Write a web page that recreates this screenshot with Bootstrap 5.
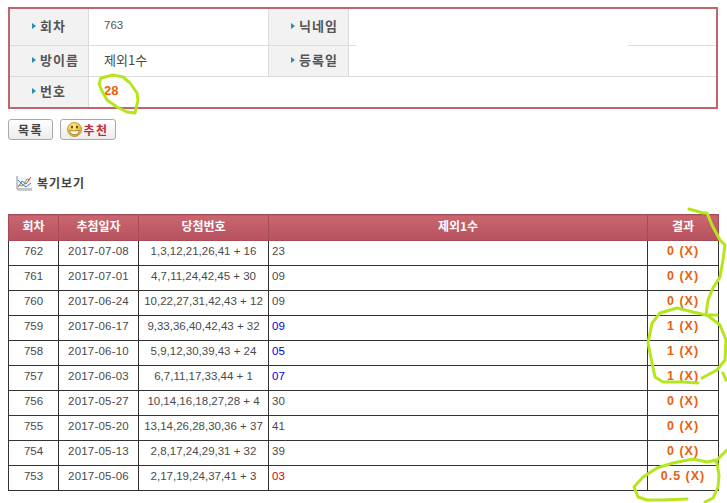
<!DOCTYPE html>
<html lang="ko">
<head>
<meta charset="utf-8">
<title>복기보기</title>
<link href="https://cdn.jsdelivr.net/npm/bootstrap@5.3.0/dist/css/bootstrap.min.css" rel="stylesheet">
<style>
html,body{height:503px;overflow:hidden;background:#fff}
body{position:relative;font-family:"Liberation Sans","Noto Sans CJK KR",sans-serif;font-size:12px;color:#444;padding:7px 9px 0 8px}
.info-box{border:2px solid #c5636c;width:710px}
.info-tbl{table-layout:fixed;width:100%;border-collapse:separate;border-spacing:0}
.info-tbl th,.info-tbl td{padding:0 0 3px;border-right:1px solid #dcdcdc;border-bottom:1px solid #dcdcdc;vertical-align:middle}
.info-tbl tr:last-child th,.info-tbl tr:last-child td{border-bottom:0}
.info-tbl td:last-child{border-right:0}
.info-tbl .r1>*{height:37px}
.info-tbl .r2>*{height:31px}
.info-tbl .r3>*{height:30px}
.info-tbl th{background:#f2f2f2;font-family:"Noto Sans CJK KR","Liberation Sans",sans-serif;font-weight:700;font-size:13px;letter-spacing:1px;color:#555;padding-left:22px;text-align:left}
.info-tbl td{padding-left:15px;font-size:11.5px;color:#555}
.info-tbl .kr{font-family:"Noto Sans CJK KR",sans-serif;font-size:13px;font-weight:400;color:#4a4a4a}
.arrow-mark{display:inline-block;width:0;height:0;border-left:4px solid #2b8db3;border-top:3.5px solid transparent;border-bottom:3.5px solid transparent;margin-right:4px;vertical-align:2px}
.nick-cell{position:relative}
.nick-cell::after{content:"";position:absolute;left:7px;width:272px;bottom:-1px;height:1px;background:#fff}
.hit-num{color:#ee5f0c;font-weight:700;font-size:13px}
.btn-row{display:flex;gap:7px;margin-top:10px}
.btn.old-btn{--bs-btn-padding-x:0;--bs-btn-padding-y:0;height:21px;display:flex;align-items:center;justify-content:center;gap:1px;background:linear-gradient(#fff,#ececec);border:1px solid #a9a9a9;border-radius:3px;font-family:"Noto Sans CJK KR",sans-serif;font-weight:700;font-size:12px;letter-spacing:1.5px;color:#444}
.btn-list{width:45px}
.btn-rec{width:56px;color:#bd2d44!important}
.section-title{display:flex;align-items:center;gap:5px;margin:34px 0 0 8px;height:18px;font-family:"Noto Sans CJK KR",sans-serif;font-weight:700;font-size:12px;letter-spacing:1px;color:#444}
.result-tbl.table{table-layout:fixed;width:710px;margin:22px 0 0;--bs-table-border-color:#333;--bs-table-color:#4a4a4a;border-collapse:collapse;font-size:11.5px}
.result-tbl.table>:not(caption)>*>*{padding:0 0 3px;height:25px;vertical-align:middle;border:1px solid #333;text-align:center}
.result-tbl.table thead th{height:26px;--bs-table-bg:transparent;background:linear-gradient(#ca666f,#b5525f);color:#fff;border-color:#a54c58;font-family:"Noto Sans CJK KR",sans-serif;font-size:12px;font-weight:700;box-shadow:none}
.result-tbl.table td.day-cell{letter-spacing:.2px}
.result-tbl.table td.pick{text-align:left;padding-left:3px}
.result-tbl.table td.pick-blue{color:#0000d8}
.result-tbl.table td.pick-red{color:#e00000}
.result-tbl.table td.res{color:#ea600b;font-weight:700;font-size:12.5px;letter-spacing:1px}
.scribble{position:absolute;left:0;top:0;pointer-events:none}
</style>
</head>
<body>
<div class="info-box">
<table class="info-tbl">
<colgroup><col style="width:79px"><col style="width:180px"><col style="width:80px"><col></colgroup>
<tr class="r1"><th><span class="arrow-mark"></span>회차</th><td>763</td><th><span class="arrow-mark"></span>닉네임</th><td class="nick-cell"></td></tr>
<tr class="r2"><th><span class="arrow-mark"></span>방이름</th><td class="kr">제외1수</td><th><span class="arrow-mark"></span>등록일</th><td></td></tr>
<tr class="r3"><th><span class="arrow-mark"></span>번호</th><td colspan="3"><span class="hit-num">28</span></td></tr>
</table>
</div>
<div class="btn-row">
<button type="button" class="btn old-btn btn-list">목록</button>
<button type="button" class="btn old-btn btn-rec">
<svg width="15" height="15" viewBox="0 0 15 15"><defs><radialGradient id="sm" cx=".4" cy=".3" r=".8"><stop offset="0" stop-color="#ffef8a"/><stop offset="1" stop-color="#e0a010"/></radialGradient></defs><circle cx="7.5" cy="7.5" r="7" fill="url(#sm)" stroke="#b98a20" stroke-width=".8"/><ellipse cx="5" cy="5" rx="1" ry="1.6" fill="#5a4010"/><ellipse cx="10" cy="5" rx="1" ry="1.6" fill="#5a4010"/><path d="M2.8 8.2Q7.5 10 12.2 8.2Q11.5 12.6 7.5 12.6Q3.5 12.6 2.8 8.2Z" fill="#fff" stroke="#7a5510" stroke-width=".6"/></svg>추천</button>
</div>
<div class="section-title">
<svg width="16" height="16" viewBox="0 0 16 16"><path d="M1 1V14H16" fill="none" stroke="#8a8a8a"/><path d="M1 15.5H16" stroke="#ccc"/><path d="M2 4H15M2 7H15M2 10H15M5 1V13M9 1V13M13 1V13" stroke="#dfe6ee" stroke-width=".7"/><path d="M2 12L6 6L10 9L15 2" fill="none" stroke="#d84a3a"/><path d="M2 5L6 9L10 12L15 8" fill="none" stroke="#3a7ad0"/><path d="M3 10L7 11L11 4L14 5" fill="none" stroke="#58b048"/></svg>
복기보기</div>
<table class="table table-bordered result-tbl">
<colgroup><col style="width:50px"><col style="width:80px"><col style="width:130px"><col style="width:379px"><col style="width:71px"></colgroup>
<thead><tr><th>회차</th><th>추첨일자</th><th>당첨번호</th><th>제외1수</th><th>결과</th></tr></thead>
<tbody>
<tr><td>762</td><td class="day-cell">2017-07-08</td><td>1,3,12,21,26,41 + 16</td><td class="pick">23</td><td class="res">0 (X)</td></tr>
<tr><td>761</td><td class="day-cell">2017-07-01</td><td>4,7,11,24,42,45 + 30</td><td class="pick">09</td><td class="res">0 (X)</td></tr>
<tr><td>760</td><td class="day-cell">2017-06-24</td><td>10,22,27,31,42,43 + 12</td><td class="pick">09</td><td class="res">0 (X)</td></tr>
<tr><td>759</td><td class="day-cell">2017-06-17</td><td>9,33,36,40,42,43 + 32</td><td class="pick pick-blue">09</td><td class="res">1 (X)</td></tr>
<tr><td>758</td><td class="day-cell">2017-06-10</td><td>5,9,12,30,39,43 + 24</td><td class="pick pick-blue">05</td><td class="res">1 (X)</td></tr>
<tr><td>757</td><td class="day-cell">2017-06-03</td><td>6,7,11,17,33,44 + 1</td><td class="pick pick-blue">07</td><td class="res">1 (X)</td></tr>
<tr><td>756</td><td class="day-cell">2017-05-27</td><td>10,14,16,18,27,28 + 4</td><td class="pick">30</td><td class="res">0 (X)</td></tr>
<tr><td>755</td><td class="day-cell">2017-05-20</td><td>13,14,26,28,30,36 + 37</td><td class="pick">41</td><td class="res">0 (X)</td></tr>
<tr><td>754</td><td class="day-cell">2017-05-13</td><td>2,8,17,24,29,31 + 32</td><td class="pick">39</td><td class="res">0 (X)</td></tr>
<tr><td>753</td><td class="day-cell">2017-05-06</td><td>2,17,19,24,37,41 + 3</td><td class="pick pick-red">03</td><td class="res">0.5 (X)</td></tr>
</tbody>
</table>
<svg class="scribble" width="727" height="503" viewBox="0 0 727 503" fill="none" stroke="#b5e61d" stroke-width="3" stroke-linecap="round" stroke-linejoin="round">
<path d="M102 91L99 84L101 78L113 75L123 77L130 83L137 93L138 100L135 113L127 112L117 107L107 100L102 91"/>
<path d="M689 209L703 213L707 213L712 225L720 240L725 245L723 260L720 277L713 288L708 300L706 315L717 315"/>
<path d="M706 315L693 312L677 308L660 313L652 323L648 343L652 363L655 377L663 382L683 382L698 383"/>
<path d="M702 378L717 370L725 360L726 340L720 325L707 315"/>
<path d="M723 373L726 380"/>
<path d="M727 450L717 460L707 462L693 459L673 463L657 468L643 477L634 487L638 497L647 500L663 500L687 499"/>
<path d="M705 502L713 498L718 487L719 475L717 463L714 460"/>
</svg>
<script src="https://cdn.jsdelivr.net/npm/bootstrap@5.3.0/dist/js/bootstrap.bundle.min.js"></script>
</body>
</html>
